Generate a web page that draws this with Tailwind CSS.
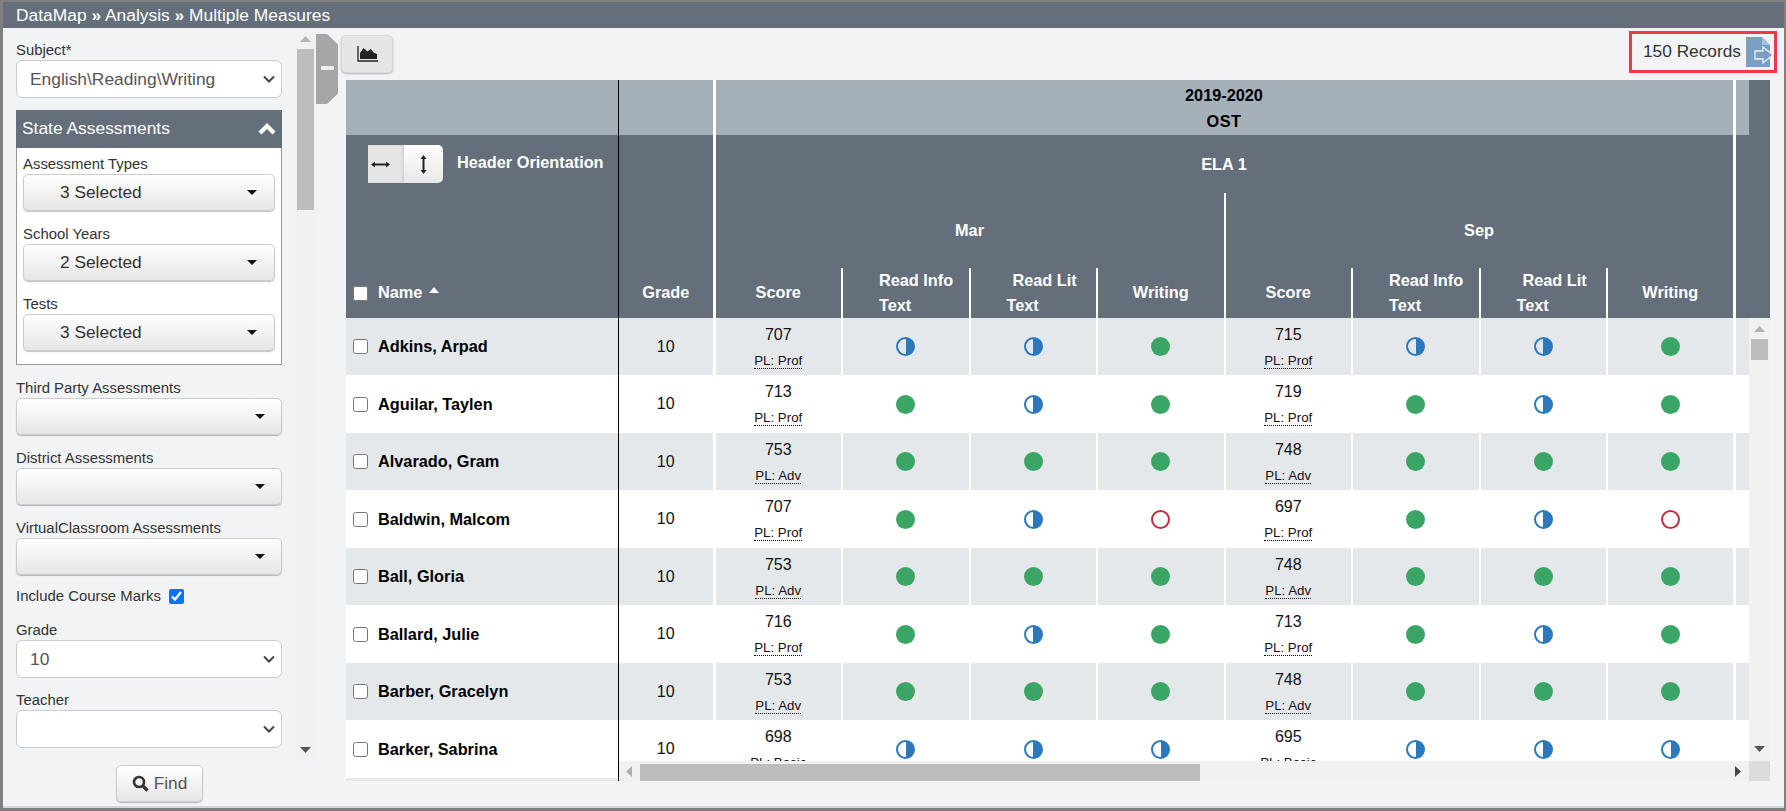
<!DOCTYPE html>
<html lang="en">
<head>
<meta charset="utf-8">
<title>DataMap</title>
<script src="https://cdn.jsdelivr.net/npm/@tailwindcss/browser@4"></script>
</head>
<body class="[font-family:'Liberation_Sans',Arial,sans-serif] bg-[#7f7f7f]">
<div class="w-[1786px] h-[811px] overflow-hidden border-l-[3px] border-t-2 border-r-2 border-b-[3px] border-[#808080] bg-[#f1f3f5] flex flex-col">
  <header class="h-[26px] shrink-0 bg-[#646f7b] text-white text-[17.4px] leading-[26px] pl-[13px]">DataMap <span class="font-bold">»</span> Analysis <span class="font-bold">»</span> Multiple Measures</header>
  <main class="flex h-[780px] border-b-2 border-[#d4d5d6]">
    <aside class="w-[313px] shrink-0 flex flex-col">
      <div class="flex h-[734px]">
        <div class="w-[292px] pl-[13px] pr-[13px] pt-[12px] text-[14.9px] text-[#333]">
          <div class="h-5 leading-5">Subject*</div>
          <div class="h-[38px] bg-white border border-[#ccc] rounded-[6px] flex items-center justify-between pl-[13px] pr-[6px] text-[17.4px] text-[#555]">
            <span>English\Reading\Writing</span>
            <svg width="12" height="8" viewBox="0 0 12 8"><path d="M1 1.5l5 5 5-5" fill="none" stroke="#444" stroke-width="2"/></svg>
          </div>
          <section class="mt-3">
            <div class="h-[38px] bg-[#646f7b] text-white text-[17.4px] flex items-center justify-between pl-[6px] pr-[6px] pb-[2px]">
              <span>State Assessments</span>
              <svg class="mt-[2px]" width="18" height="12" viewBox="0 0 18 12"><path d="M2 10l7-7 7 7" fill="none" stroke="#fff" stroke-width="4.200"/></svg>
            </div>
            <div class="h-[217px] bg-white border border-t-0 border-[#999] px-[6px] pt-[6px]">
              <div class="h-5 leading-5">Assessment Types</div>
              <div class="h-[37px] mb-[13px] rounded-[5px] border border-[#ccc] bg-linear-to-b from-white to-[#e6e6e6] shadow-[0_1px_1px_rgba(0,0,0,0.25)] flex items-center justify-between pl-[36px] pr-[17px] text-[17.3px]">
                <span>3 Selected</span>
                <svg width="10" height="5" viewBox="0 0 10 5"><path d="M0 0h10L5 5z" fill="#111"/></svg>
              </div>
              <div class="h-5 leading-5">School Years</div>
              <div class="h-[37px] mb-[13px] rounded-[5px] border border-[#ccc] bg-linear-to-b from-white to-[#e6e6e6] shadow-[0_1px_1px_rgba(0,0,0,0.25)] flex items-center justify-between pl-[36px] pr-[17px] text-[17.3px]">
                <span>2 Selected</span>
                <svg width="10" height="5" viewBox="0 0 10 5"><path d="M0 0h10L5 5z" fill="#111"/></svg>
              </div>
              <div class="h-5 leading-5">Tests</div>
              <div class="h-[37px] rounded-[5px] border border-[#ccc] bg-linear-to-b from-white to-[#e6e6e6] shadow-[0_1px_1px_rgba(0,0,0,0.25)] flex items-center justify-between pl-[36px] pr-[17px] text-[17.3px]">
                <span>3 Selected</span>
                <svg width="10" height="5" viewBox="0 0 10 5"><path d="M0 0h10L5 5z" fill="#111"/></svg>
              </div>
            </div>
          </section>
          <div class="h-5 leading-5 mt-[13px]">Third Party Assessments</div>
          <div class="h-[37px] mb-[13px] rounded-[5px] border border-[#ccc] bg-linear-to-b from-white to-[#e6e6e6] shadow-[0_1px_1px_rgba(0,0,0,0.25)] flex items-center justify-end pr-[16px]">
            <svg width="10" height="5" viewBox="0 0 10 5"><path d="M0 0h10L5 5z" fill="#111"/></svg>
          </div>
          <div class="h-5 leading-5">District Assessments</div>
          <div class="h-[37px] mb-[13px] rounded-[5px] border border-[#ccc] bg-linear-to-b from-white to-[#e6e6e6] shadow-[0_1px_1px_rgba(0,0,0,0.25)] flex items-center justify-end pr-[16px]">
            <svg width="10" height="5" viewBox="0 0 10 5"><path d="M0 0h10L5 5z" fill="#111"/></svg>
          </div>
          <div class="h-5 leading-5">VirtualClassroom Assessments</div>
          <div class="h-[37px] rounded-[5px] border border-[#ccc] bg-linear-to-b from-white to-[#e6e6e6] shadow-[0_1px_1px_rgba(0,0,0,0.25)] flex items-center justify-end pr-[16px]">
            <svg width="10" height="5" viewBox="0 0 10 5"><path d="M0 0h10L5 5z" fill="#111"/></svg>
          </div>
          <label class="mt-[11px] h-5 flex items-center gap-[8px]">
            <span>Include Course Marks</span>
            <input type="checkbox" checked class="w-[15px] h-[15px]">
          </label>
          <div class="h-5 leading-5 mt-[14px]">Grade</div>
          <div class="h-[38px] bg-white border border-[#ccc] rounded-[6px] flex items-center justify-between pl-[13px] pr-[6px] text-[17.4px] text-[#555]">
            <span>10</span>
            <svg width="12" height="8" viewBox="0 0 12 8"><path d="M1 1.5l5 5 5-5" fill="none" stroke="#444" stroke-width="2"/></svg>
          </div>
          <div class="h-5 leading-5 mt-3">Teacher</div>
          <div class="h-[38px] bg-white border border-[#ccc] rounded-[6px] flex items-center justify-end pr-[6px]">
            <svg width="12" height="8" viewBox="0 0 12 8"><path d="M1 1.5l5 5 5-5" fill="none" stroke="#444" stroke-width="2"/></svg>
          </div>
        </div>
        <div class="w-[21px] mt-1 h-[730px] bg-[#f1f1f1] flex flex-col items-center relative">
          <svg class="mt-[4px]" width="11" height="6" viewBox="0 0 11 6"><path d="M0 6h11L5.500 0z" fill="#b5b5b5"/></svg>
          <div class="w-[17px] h-[161px] bg-[#bdbdbd] mt-[7px]"></div>
          <svg class="absolute bottom-[9px]" width="11" height="6" viewBox="0 0 11 6"><path d="M0 0h11L5.500 6z" fill="#555"/></svg>
        </div>
      </div>
      <div class="flex justify-center pt-[3px]">
        <button class="w-[87px] h-[37px] rounded-[5px] border border-[#ccc] bg-linear-to-b from-white to-[#e6e6e6] shadow-[0_1px_1px_rgba(0,0,0,0.25)] flex items-center justify-center gap-[5px] text-[17.3px] text-[#555]">
          <svg width="17" height="17" viewBox="0 0 17 17"><circle cx="7" cy="7" r="5" fill="none" stroke="#333" stroke-width="2.600"/><path d="M10.500 10.500l5 5" stroke="#333" stroke-width="3.200"/></svg>
          <span>Find</span>
        </button>
      </div>
    </aside>

    <div class="w-[22px] h-[70px] mt-[6px] shrink-0 bg-[#a6a6a6] [clip-path:polygon(0_0,50%_0,100%_15%,100%_85%,50%_100%,0_100%)] flex items-center justify-center">
      <div class="w-[13px] h-[4px] rounded-[1px] bg-[#eee] -mt-[2px]"></div>
    </div>

    <div class="w-[1446px] shrink-0">
      <div class="h-[52px] flex items-start justify-between pl-[3px] pr-[7px]">
        <button class="mt-[7px] w-[52px] h-[38px] rounded-[5px] border border-[#d8d9da] bg-[#e6e6e6] shadow-[0_1px_2px_rgba(0,0,0,0.25)] flex items-center justify-center">
          <svg width="21" height="16" viewBox="0 0 21 16"><path d="M1 0v15h20" fill="none" stroke="#222" stroke-width="1.300"/><path d="M3 13V7l3.500-5 4 3.500L14 3l2.500 3.500L20 8v5z" fill="#222"/></svg>
        </button>
        <div class="mt-[3px] w-[148px] h-[42px] border-[3px] border-[#ef3a44] flex items-center pl-[11px] text-[17.3px] text-[#333] relative">
          <span>150 Records</span>
          <svg class="absolute left-[114px] top-[3px] overflow-visible" width="24" height="30" viewBox="0 0 24 30">
            <path d="M0 0h16l8 8v22H0z" fill="#7b9fc3"/>
            <path d="M16 0l8 8h-8z" fill="#a9c1d9"/>
            <path d="M9 14h8v-4l10 8-10 8v-4H9z" fill="#7b9fc3" stroke="#eef2f6" stroke-width="1.300"/>
          </svg>
        </div>
      </div>

      <div class="ml-2 w-[1424px] h-[701px] flex flex-col overflow-hidden">
        <!-- header -->
        <div class="h-[238px] shrink-0 flex bg-[#646f7b] text-white font-bold text-[16.3px]">
          <div class="w-[273px] shrink-0 border-r border-black flex flex-col">
            <div class="h-[55px] bg-[#a6b0b8]"></div>
            <div class="flex-1 flex flex-col justify-between">
              <div class="mt-[10px] flex items-start pl-[22px]">
                <div class="flex h-[38px]">
                  <div class="w-[36px] bg-[#e6e6e6] flex items-center pl-[3px] shadow-[inset_-2px_0_2px_rgba(0,0,0,0.08)]">
                    <svg width="19" height="7" viewBox="0 0 19 7"><path d="M3 3.500h13" stroke="#222" stroke-width="2"/><path d="M0 3.500L4 .5v6zM19 3.500L15 .5v6z" fill="#222"/></svg>
                  </div>
                  <div class="w-[39px] rounded-r-[5px] bg-linear-to-b from-white to-[#e8e8e8] flex items-center justify-center">
                    <svg width="7" height="19" viewBox="0 0 7 19"><path d="M3.500 3v13" stroke="#222" stroke-width="2"/><path d="M3.500 0L.5 4h6zM3.500 19L.5 15h6z" fill="#222"/></svg>
                  </div>
                </div>
                <span class="ml-[14px] leading-[34px]">Header Orientation</span>
              </div>
              <div class="h-[50px] flex items-center pl-[7px] gap-[10px]">
                <input type="checkbox" class="w-[15px] h-[15px]">
                <span class="-mt-[2px]">Name</span>
                <svg class="-ml-[3px] -mt-[6px]" width="10" height="6" viewBox="0 0 10 6"><path d="M0 6h10L5 0z" fill="#fff"/></svg>
              </div>
            </div>
          </div>
          <div class="w-[96.5px] shrink-0 border-r-[3px] border-white flex flex-col">
            <div class="h-[55px] bg-[#a6b0b8]"></div>
            <div class="flex-1 flex items-end justify-center"><span class="h-[50px] leading-[48px]">Grade</span></div>
          </div>
          <div class="w-[1020px] shrink-0 flex flex-col">
            <div class="h-[55px] bg-[#a6b0b8] border-r-[3px] border-white text-black text-center leading-[26px] pt-[2px]">
              <div>2019-2020</div>
              <div class="tracking-[0.5px]">OST</div>
            </div>
            <div class="h-[58px] border-r-[3px] border-white flex items-center justify-center pt-[1px]">ELA 1</div>
            <div class="flex flex-1">
              <div class="w-[510px] border-r-2 border-white flex flex-col">
                <div class="h-[75px] flex items-center justify-center">Mar</div>
                <div class="h-[50px] flex">
                  <div class="w-[127.5px] border-r-2 border-white flex items-center justify-center pb-[2px]">Score</div>
                  <div class="w-[127.5px] border-r-2 border-white leading-[25px] pl-[36px]"><div>Read Info</div><div>Text</div></div>
                  <div class="w-[127.5px] border-r-2 border-white leading-[25px] pl-[36px]"><div class="pl-[6px]">Read Lit</div><div>Text</div></div>
                  <div class="flex-1 flex items-center justify-center pb-[2px]">Writing</div>
                </div>
              </div>
              <div class="w-[510px] border-r-[3px] border-white flex flex-col">
                <div class="h-[75px] flex items-center justify-center">Sep</div>
                <div class="h-[50px] flex">
                  <div class="w-[127.5px] border-r-2 border-white flex items-center justify-center pb-[2px]">Score</div>
                  <div class="w-[127.5px] border-r-2 border-white leading-[25px] pl-[36px]"><div>Read Info</div><div>Text</div></div>
                  <div class="w-[127.5px] border-r-2 border-white leading-[25px] pl-[36px]"><div class="pl-[6px]">Read Lit</div><div>Text</div></div>
                  <div class="flex-1 flex items-center justify-center pb-[2px]">Writing</div>
                </div>
              </div>
            </div>
          </div>
          <div class="w-[13.5px] shrink-0"><div class="h-[55px] bg-[#a6b0b8]"></div></div>
          <div class="w-[21px] shrink-0"></div>
        </div>

        <!-- body -->
        <div class="relative h-[463px] overflow-hidden text-[16px] text-[#111]">
          <div class="flex h-[57px] bg-[#e5e8eb]">
            <div class="w-[273px] shrink-0 border-r border-black flex items-center pl-[7px] gap-[10px] font-bold text-[16.3px] text-black"><input type="checkbox" class="w-[15px] h-[15px]"><span>Adkins, Arpad</span></div>
            <div class="w-[96.5px] shrink-0 border-r-[3px] border-white flex items-center justify-center">10</div>
            <div class="w-[127.5px] shrink-0 border-r-2 border-white flex flex-col items-center justify-center pt-[2px]"><span class="leading-[26px]">707</span><span class="text-[13.3px] h-[26px] leading-[26px]"><span class="border-b border-dotted border-black">PL: Prof</span></span></div>
            <div class="w-[127.5px] shrink-0 border-r-2 border-white flex items-center justify-center"><div class="w-[19px] h-[19px] rounded-full border-2 border-[#2b78bb] bg-[linear-gradient(90deg,transparent_50%,#2b78bb_50%)]"></div></div>
            <div class="w-[127.5px] shrink-0 border-r-2 border-white flex items-center justify-center"><div class="w-[19px] h-[19px] rounded-full border-2 border-[#2b78bb] bg-[linear-gradient(90deg,transparent_50%,#2b78bb_50%)]"></div></div>
            <div class="w-[127.5px] shrink-0 border-r-2 border-white flex items-center justify-center"><div class="w-[19px] h-[19px] rounded-full bg-[#3aa565]"></div></div>
            <div class="w-[127.5px] shrink-0 border-r-2 border-white flex flex-col items-center justify-center pt-[2px]"><span class="leading-[26px]">715</span><span class="text-[13.3px] h-[26px] leading-[26px]"><span class="border-b border-dotted border-black">PL: Prof</span></span></div>
            <div class="w-[127.5px] shrink-0 border-r-2 border-white flex items-center justify-center"><div class="w-[19px] h-[19px] rounded-full border-2 border-[#2b78bb] bg-[linear-gradient(90deg,transparent_50%,#2b78bb_50%)]"></div></div>
            <div class="w-[127.5px] shrink-0 border-r-2 border-white flex items-center justify-center"><div class="w-[19px] h-[19px] rounded-full border-2 border-[#2b78bb] bg-[linear-gradient(90deg,transparent_50%,#2b78bb_50%)]"></div></div>
            <div class="w-[127.5px] shrink-0 border-r-[3px] border-white flex items-center justify-center"><div class="w-[19px] h-[19px] rounded-full bg-[#3aa565]"></div></div>
          </div>
          <div class="flex h-[58px] bg-white">
            <div class="w-[273px] shrink-0 border-r border-black flex items-center pl-[7px] gap-[10px] font-bold text-[16.3px] text-black"><input type="checkbox" class="w-[15px] h-[15px]"><span>Aguilar, Taylen</span></div>
            <div class="w-[96.5px] shrink-0 border-r-[3px] border-white flex items-center justify-center">10</div>
            <div class="w-[127.5px] shrink-0 border-r-2 border-white flex flex-col items-center justify-center pt-[2px]"><span class="leading-[26px]">713</span><span class="text-[13.3px] h-[26px] leading-[26px]"><span class="border-b border-dotted border-black">PL: Prof</span></span></div>
            <div class="w-[127.5px] shrink-0 border-r-2 border-white flex items-center justify-center"><div class="w-[19px] h-[19px] rounded-full bg-[#3aa565]"></div></div>
            <div class="w-[127.5px] shrink-0 border-r-2 border-white flex items-center justify-center"><div class="w-[19px] h-[19px] rounded-full border-2 border-[#2b78bb] bg-[linear-gradient(90deg,transparent_50%,#2b78bb_50%)]"></div></div>
            <div class="w-[127.5px] shrink-0 border-r-2 border-white flex items-center justify-center"><div class="w-[19px] h-[19px] rounded-full bg-[#3aa565]"></div></div>
            <div class="w-[127.5px] shrink-0 border-r-2 border-white flex flex-col items-center justify-center pt-[2px]"><span class="leading-[26px]">719</span><span class="text-[13.3px] h-[26px] leading-[26px]"><span class="border-b border-dotted border-black">PL: Prof</span></span></div>
            <div class="w-[127.5px] shrink-0 border-r-2 border-white flex items-center justify-center"><div class="w-[19px] h-[19px] rounded-full bg-[#3aa565]"></div></div>
            <div class="w-[127.5px] shrink-0 border-r-2 border-white flex items-center justify-center"><div class="w-[19px] h-[19px] rounded-full border-2 border-[#2b78bb] bg-[linear-gradient(90deg,transparent_50%,#2b78bb_50%)]"></div></div>
            <div class="w-[127.5px] shrink-0 border-r-[3px] border-white flex items-center justify-center"><div class="w-[19px] h-[19px] rounded-full bg-[#3aa565]"></div></div>
          </div>
          <div class="flex h-[57px] bg-[#e5e8eb]">
            <div class="w-[273px] shrink-0 border-r border-black flex items-center pl-[7px] gap-[10px] font-bold text-[16.3px] text-black"><input type="checkbox" class="w-[15px] h-[15px]"><span>Alvarado, Gram</span></div>
            <div class="w-[96.5px] shrink-0 border-r-[3px] border-white flex items-center justify-center">10</div>
            <div class="w-[127.5px] shrink-0 border-r-2 border-white flex flex-col items-center justify-center pt-[2px]"><span class="leading-[26px]">753</span><span class="text-[13.3px] h-[26px] leading-[26px]"><span class="border-b border-dotted border-black">PL: Adv</span></span></div>
            <div class="w-[127.5px] shrink-0 border-r-2 border-white flex items-center justify-center"><div class="w-[19px] h-[19px] rounded-full bg-[#3aa565]"></div></div>
            <div class="w-[127.5px] shrink-0 border-r-2 border-white flex items-center justify-center"><div class="w-[19px] h-[19px] rounded-full bg-[#3aa565]"></div></div>
            <div class="w-[127.5px] shrink-0 border-r-2 border-white flex items-center justify-center"><div class="w-[19px] h-[19px] rounded-full bg-[#3aa565]"></div></div>
            <div class="w-[127.5px] shrink-0 border-r-2 border-white flex flex-col items-center justify-center pt-[2px]"><span class="leading-[26px]">748</span><span class="text-[13.3px] h-[26px] leading-[26px]"><span class="border-b border-dotted border-black">PL: Adv</span></span></div>
            <div class="w-[127.5px] shrink-0 border-r-2 border-white flex items-center justify-center"><div class="w-[19px] h-[19px] rounded-full bg-[#3aa565]"></div></div>
            <div class="w-[127.5px] shrink-0 border-r-2 border-white flex items-center justify-center"><div class="w-[19px] h-[19px] rounded-full bg-[#3aa565]"></div></div>
            <div class="w-[127.5px] shrink-0 border-r-[3px] border-white flex items-center justify-center"><div class="w-[19px] h-[19px] rounded-full bg-[#3aa565]"></div></div>
          </div>
          <div class="flex h-[58px] bg-white">
            <div class="w-[273px] shrink-0 border-r border-black flex items-center pl-[7px] gap-[10px] font-bold text-[16.3px] text-black"><input type="checkbox" class="w-[15px] h-[15px]"><span>Baldwin, Malcom</span></div>
            <div class="w-[96.5px] shrink-0 border-r-[3px] border-white flex items-center justify-center">10</div>
            <div class="w-[127.5px] shrink-0 border-r-2 border-white flex flex-col items-center justify-center pt-[2px]"><span class="leading-[26px]">707</span><span class="text-[13.3px] h-[26px] leading-[26px]"><span class="border-b border-dotted border-black">PL: Prof</span></span></div>
            <div class="w-[127.5px] shrink-0 border-r-2 border-white flex items-center justify-center"><div class="w-[19px] h-[19px] rounded-full bg-[#3aa565]"></div></div>
            <div class="w-[127.5px] shrink-0 border-r-2 border-white flex items-center justify-center"><div class="w-[19px] h-[19px] rounded-full border-2 border-[#2b78bb] bg-[linear-gradient(90deg,transparent_50%,#2b78bb_50%)]"></div></div>
            <div class="w-[127.5px] shrink-0 border-r-2 border-white flex items-center justify-center"><div class="w-[19px] h-[19px] rounded-full border-2 border-[#c0313f]"></div></div>
            <div class="w-[127.5px] shrink-0 border-r-2 border-white flex flex-col items-center justify-center pt-[2px]"><span class="leading-[26px]">697</span><span class="text-[13.3px] h-[26px] leading-[26px]"><span class="border-b border-dotted border-black">PL: Prof</span></span></div>
            <div class="w-[127.5px] shrink-0 border-r-2 border-white flex items-center justify-center"><div class="w-[19px] h-[19px] rounded-full bg-[#3aa565]"></div></div>
            <div class="w-[127.5px] shrink-0 border-r-2 border-white flex items-center justify-center"><div class="w-[19px] h-[19px] rounded-full border-2 border-[#2b78bb] bg-[linear-gradient(90deg,transparent_50%,#2b78bb_50%)]"></div></div>
            <div class="w-[127.5px] shrink-0 border-r-[3px] border-white flex items-center justify-center"><div class="w-[19px] h-[19px] rounded-full border-2 border-[#c0313f]"></div></div>
          </div>
          <div class="flex h-[57px] bg-[#e5e8eb]">
            <div class="w-[273px] shrink-0 border-r border-black flex items-center pl-[7px] gap-[10px] font-bold text-[16.3px] text-black"><input type="checkbox" class="w-[15px] h-[15px]"><span>Ball, Gloria</span></div>
            <div class="w-[96.5px] shrink-0 border-r-[3px] border-white flex items-center justify-center">10</div>
            <div class="w-[127.5px] shrink-0 border-r-2 border-white flex flex-col items-center justify-center pt-[2px]"><span class="leading-[26px]">753</span><span class="text-[13.3px] h-[26px] leading-[26px]"><span class="border-b border-dotted border-black">PL: Adv</span></span></div>
            <div class="w-[127.5px] shrink-0 border-r-2 border-white flex items-center justify-center"><div class="w-[19px] h-[19px] rounded-full bg-[#3aa565]"></div></div>
            <div class="w-[127.5px] shrink-0 border-r-2 border-white flex items-center justify-center"><div class="w-[19px] h-[19px] rounded-full bg-[#3aa565]"></div></div>
            <div class="w-[127.5px] shrink-0 border-r-2 border-white flex items-center justify-center"><div class="w-[19px] h-[19px] rounded-full bg-[#3aa565]"></div></div>
            <div class="w-[127.5px] shrink-0 border-r-2 border-white flex flex-col items-center justify-center pt-[2px]"><span class="leading-[26px]">748</span><span class="text-[13.3px] h-[26px] leading-[26px]"><span class="border-b border-dotted border-black">PL: Adv</span></span></div>
            <div class="w-[127.5px] shrink-0 border-r-2 border-white flex items-center justify-center"><div class="w-[19px] h-[19px] rounded-full bg-[#3aa565]"></div></div>
            <div class="w-[127.5px] shrink-0 border-r-2 border-white flex items-center justify-center"><div class="w-[19px] h-[19px] rounded-full bg-[#3aa565]"></div></div>
            <div class="w-[127.5px] shrink-0 border-r-[3px] border-white flex items-center justify-center"><div class="w-[19px] h-[19px] rounded-full bg-[#3aa565]"></div></div>
          </div>
          <div class="flex h-[58px] bg-white">
            <div class="w-[273px] shrink-0 border-r border-black flex items-center pl-[7px] gap-[10px] font-bold text-[16.3px] text-black"><input type="checkbox" class="w-[15px] h-[15px]"><span>Ballard, Julie</span></div>
            <div class="w-[96.5px] shrink-0 border-r-[3px] border-white flex items-center justify-center">10</div>
            <div class="w-[127.5px] shrink-0 border-r-2 border-white flex flex-col items-center justify-center pt-[2px]"><span class="leading-[26px]">716</span><span class="text-[13.3px] h-[26px] leading-[26px]"><span class="border-b border-dotted border-black">PL: Prof</span></span></div>
            <div class="w-[127.5px] shrink-0 border-r-2 border-white flex items-center justify-center"><div class="w-[19px] h-[19px] rounded-full bg-[#3aa565]"></div></div>
            <div class="w-[127.5px] shrink-0 border-r-2 border-white flex items-center justify-center"><div class="w-[19px] h-[19px] rounded-full border-2 border-[#2b78bb] bg-[linear-gradient(90deg,transparent_50%,#2b78bb_50%)]"></div></div>
            <div class="w-[127.5px] shrink-0 border-r-2 border-white flex items-center justify-center"><div class="w-[19px] h-[19px] rounded-full bg-[#3aa565]"></div></div>
            <div class="w-[127.5px] shrink-0 border-r-2 border-white flex flex-col items-center justify-center pt-[2px]"><span class="leading-[26px]">713</span><span class="text-[13.3px] h-[26px] leading-[26px]"><span class="border-b border-dotted border-black">PL: Prof</span></span></div>
            <div class="w-[127.5px] shrink-0 border-r-2 border-white flex items-center justify-center"><div class="w-[19px] h-[19px] rounded-full bg-[#3aa565]"></div></div>
            <div class="w-[127.5px] shrink-0 border-r-2 border-white flex items-center justify-center"><div class="w-[19px] h-[19px] rounded-full border-2 border-[#2b78bb] bg-[linear-gradient(90deg,transparent_50%,#2b78bb_50%)]"></div></div>
            <div class="w-[127.5px] shrink-0 border-r-[3px] border-white flex items-center justify-center"><div class="w-[19px] h-[19px] rounded-full bg-[#3aa565]"></div></div>
          </div>
          <div class="flex h-[57px] bg-[#e5e8eb]">
            <div class="w-[273px] shrink-0 border-r border-black flex items-center pl-[7px] gap-[10px] font-bold text-[16.3px] text-black"><input type="checkbox" class="w-[15px] h-[15px]"><span>Barber, Gracelyn</span></div>
            <div class="w-[96.5px] shrink-0 border-r-[3px] border-white flex items-center justify-center">10</div>
            <div class="w-[127.5px] shrink-0 border-r-2 border-white flex flex-col items-center justify-center pt-[2px]"><span class="leading-[26px]">753</span><span class="text-[13.3px] h-[26px] leading-[26px]"><span class="border-b border-dotted border-black">PL: Adv</span></span></div>
            <div class="w-[127.5px] shrink-0 border-r-2 border-white flex items-center justify-center"><div class="w-[19px] h-[19px] rounded-full bg-[#3aa565]"></div></div>
            <div class="w-[127.5px] shrink-0 border-r-2 border-white flex items-center justify-center"><div class="w-[19px] h-[19px] rounded-full bg-[#3aa565]"></div></div>
            <div class="w-[127.5px] shrink-0 border-r-2 border-white flex items-center justify-center"><div class="w-[19px] h-[19px] rounded-full bg-[#3aa565]"></div></div>
            <div class="w-[127.5px] shrink-0 border-r-2 border-white flex flex-col items-center justify-center pt-[2px]"><span class="leading-[26px]">748</span><span class="text-[13.3px] h-[26px] leading-[26px]"><span class="border-b border-dotted border-black">PL: Adv</span></span></div>
            <div class="w-[127.5px] shrink-0 border-r-2 border-white flex items-center justify-center"><div class="w-[19px] h-[19px] rounded-full bg-[#3aa565]"></div></div>
            <div class="w-[127.5px] shrink-0 border-r-2 border-white flex items-center justify-center"><div class="w-[19px] h-[19px] rounded-full bg-[#3aa565]"></div></div>
            <div class="w-[127.5px] shrink-0 border-r-[3px] border-white flex items-center justify-center"><div class="w-[19px] h-[19px] rounded-full bg-[#3aa565]"></div></div>
          </div>
          <div class="flex h-[58px] bg-white">
            <div class="w-[273px] shrink-0 border-r border-black flex items-center pl-[7px] gap-[10px] font-bold text-[16.3px] text-black"><input type="checkbox" class="w-[15px] h-[15px]"><span>Barker, Sabrina</span></div>
            <div class="w-[96.5px] shrink-0 border-r-[3px] border-white flex items-center justify-center">10</div>
            <div class="w-[127.5px] shrink-0 border-r-2 border-white flex flex-col items-center justify-center pt-[2px]"><span class="leading-[26px]">698</span><span class="text-[13.3px] h-[26px] leading-[26px]"><span class="border-b border-dotted border-black">PL: Basic</span></span></div>
            <div class="w-[127.5px] shrink-0 border-r-2 border-white flex items-center justify-center"><div class="w-[19px] h-[19px] rounded-full border-2 border-[#2b78bb] bg-[linear-gradient(90deg,transparent_50%,#2b78bb_50%)]"></div></div>
            <div class="w-[127.5px] shrink-0 border-r-2 border-white flex items-center justify-center"><div class="w-[19px] h-[19px] rounded-full border-2 border-[#2b78bb] bg-[linear-gradient(90deg,transparent_50%,#2b78bb_50%)]"></div></div>
            <div class="w-[127.5px] shrink-0 border-r-2 border-white flex items-center justify-center"><div class="w-[19px] h-[19px] rounded-full border-2 border-[#2b78bb] bg-[linear-gradient(90deg,transparent_50%,#2b78bb_50%)]"></div></div>
            <div class="w-[127.5px] shrink-0 border-r-2 border-white flex flex-col items-center justify-center pt-[2px]"><span class="leading-[26px]">695</span><span class="text-[13.3px] h-[26px] leading-[26px]"><span class="border-b border-dotted border-black">PL: Basic</span></span></div>
            <div class="w-[127.5px] shrink-0 border-r-2 border-white flex items-center justify-center"><div class="w-[19px] h-[19px] rounded-full border-2 border-[#2b78bb] bg-[linear-gradient(90deg,transparent_50%,#2b78bb_50%)]"></div></div>
            <div class="w-[127.5px] shrink-0 border-r-2 border-white flex items-center justify-center"><div class="w-[19px] h-[19px] rounded-full border-2 border-[#2b78bb] bg-[linear-gradient(90deg,transparent_50%,#2b78bb_50%)]"></div></div>
            <div class="w-[127.5px] shrink-0 border-r-[3px] border-white flex items-center justify-center"><div class="w-[19px] h-[19px] rounded-full border-2 border-[#2b78bb] bg-[linear-gradient(90deg,transparent_50%,#2b78bb_50%)]"></div></div>
          </div>
          <div class="flex h-[58px] bg-[#e5e8eb]">
            <div class="w-[273px] shrink-0 border-r border-black"></div>
          </div>

          <!-- vertical scrollbar -->
          <div class="absolute right-0 top-0 w-[21px] h-[443px] bg-[#f1f1f1] flex flex-col items-center">
            <svg class="mt-[8px]" width="11" height="6" viewBox="0 0 11 6"><path d="M0 6h11L5.500 0z" fill="#b0b0b0"/></svg>
            <div class="w-[17px] h-[21px] bg-[#bdbdbd] mt-[7px]"></div>
            <svg class="absolute bottom-[9px]" width="11" height="6" viewBox="0 0 11 6"><path d="M0 0h11L5.500 6z" fill="#555"/></svg>
          </div>
          <!-- horizontal scrollbar -->
          <div class="absolute left-[273px] right-0 bottom-0 h-[20px] bg-[#f1f1f1] flex items-center">
            <svg class="ml-[7px]" width="6" height="11" viewBox="0 0 6 11"><path d="M6 0v11L0 5.500z" fill="#b0b0b0"/></svg>
            <div class="ml-[8px] w-[560px] h-[17px] mt-[2px] bg-[#bdbdbd]"></div>
            <svg class="absolute right-[29px]" width="6" height="11" viewBox="0 0 6 11"><path d="M0 0v11l6-5.500z" fill="#444"/></svg>
            <div class="absolute right-0 top-0 w-[21px] h-[20px] bg-[#dcdcdc]"></div>
          </div>
        </div>
      </div>
    </div>
  </main>
</div>
</body>
</html>
